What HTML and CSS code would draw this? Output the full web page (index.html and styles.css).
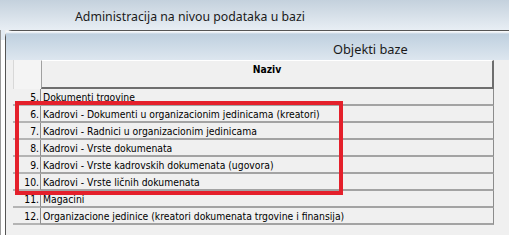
FILE: index.html
```html
<!DOCTYPE html>
<html lang="sr">
<head>
    <meta charset="UTF-8">
    <title>Administracija na nivou podataka u bazi</title>
    <link rel="stylesheet" href="styles.css">
</head>
<body>
    <div class="titlebar">Administracija na nivou podataka u bazi</div>
    <div class="outer">
        <div class="side"></div>
        <div class="panel">
            <div class="panel-head">Objekti baze</div>
            <div class="grid">
                <div class="row head">
                    <div class="num"></div>
                    <div class="name">Naziv</div>
                </div>
                <div class="row"><div class="num">5.</div><div class="name">Dokumenti trgovine</div></div>
                <div class="row"><div class="num">6.</div><div class="name">Kadrovi - Dokumenti u organizacionim jedinicama (kreatori)</div></div>
                <div class="row"><div class="num">7.</div><div class="name">Kadrovi - Radnici u organizacionim jedinicama</div></div>
                <div class="row"><div class="num">8.</div><div class="name">Kadrovi - Vrste dokumenata</div></div>
                <div class="row"><div class="num">9.</div><div class="name">Kadrovi - Vrste kadrovskih dokumenata (ugovora)</div></div>
                <div class="row"><div class="num">10.</div><div class="name">Kadrovi - Vrste ličnih dokumenata</div></div>
                <div class="row"><div class="num">11.</div><div class="name">Magacini</div></div>
                <div class="row"><div class="num">12.</div><div class="name">Organizacione jedinice (kreatori dokumenata trgovine i finansija)</div></div>
            </div>
        </div>
    </div>
    <div class="marker"></div>
</body>
</html>
```

FILE: styles.css
```css
body {
    margin: 0;
    width: 509px;
    height: 235px;
    overflow: hidden;
    background: #f0f0f0;
    font-family: "DejaVu Sans Condensed", "DejaVu Sans", sans-serif;
    position: relative;
}

.titlebar {
    height: 30px;
    line-height: 34px;
    padding-left: 75px;
    box-sizing: border-box;
    font-family: "Noto Sans", sans-serif;
    font-size: 12.3px;
    color: #1a1a1a;
    background: linear-gradient(#c4d1dd, #e8eef4);
}

.outer {
    display: flex;
    height: 205px;
}

.side {
    width: 5px;
    background: linear-gradient(#e4ebf2 0, #e4ebf2 10px, #fff 10px);
    border-left: 1px solid #9a9a9a;
    box-sizing: border-box;
}

.panel {
    flex: 1;
    border-top: 1px solid #555;
    border-left: 1px solid #555;
    border-top-left-radius: 7px;
    background: #f0f0f0;
}

.panel-head {
    height: 29px;
    line-height: 36px;
    padding-left: 327px;
    font-family: "Noto Sans", sans-serif;
    font-size: 12.8px;
    color: #1a1a1a;
    background: linear-gradient(#f6f8fa 0, #f6f8fa 1px, #bfd0df 3px, #dde6ef 100%);
}

.grid {
    padding-left: 7px;
    width: 481px;
}

.row {
    display: flex;
    height: 17px;
    font-size: 10.3px;
    line-height: 16px;
    color: #000;
}

.num {
    width: 28px;
    box-sizing: border-box;
    text-align: right;
    padding-right: 1px;
    border-bottom: 2px solid #b4b4b4;
    border-right: 1px solid #8c8c8c;
}

.name {
    flex: 1;
    padding-left: 2px;
    border-bottom: 2px solid #a3a3a3;
    border-right: 1px solid #8c8c8c;
    white-space: nowrap;
    overflow: hidden;
}

.row.head {
    height: 29px;
}

.row.head .num {
    border-bottom: none;
    border-left: 1px solid #d8d8d8;
    border-right: none;
    background: #f4f4f4;
}

.row.head .name {
    border-left: 1px solid #a0a0a0;
    border-top: 1px solid #fff;
    border-right: 2px solid #6e6e6e;
    border-bottom: 2px solid #6e6e6e;
    text-align: center;
    font-weight: bold;
    line-height: 16px;
    padding-left: 0;
}

.marker {
    position: absolute;
    left: 15px;
    top: 101px;
    width: 328px;
    height: 94px;
    box-sizing: border-box;
    border: 4px solid #e4202b;
}
```
